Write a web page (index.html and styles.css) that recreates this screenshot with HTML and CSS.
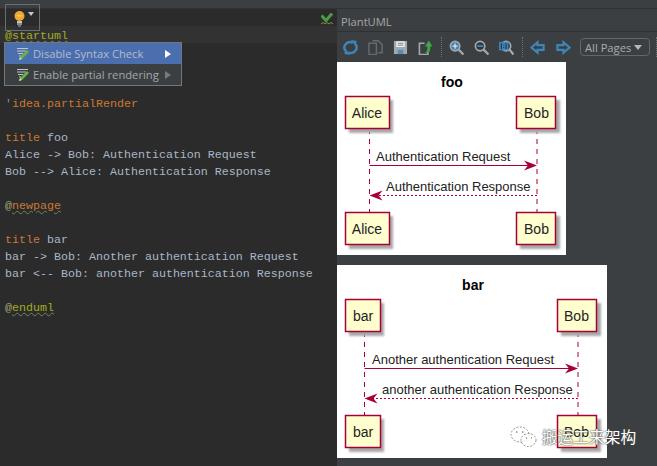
FILE: index.html
```html
<!DOCTYPE html>
<html lang="en">
<head>
    <meta charset="UTF-8">
    <title>PlantUML</title>
    <link rel="stylesheet" href="styles.css">
</head>
<body>
<div class="top-strip"></div>
<div class="workspace">
    <section class="editor">
        <div class="editor-bar">
            <svg class="check-icon" viewBox="0 0 12 12">
                <path d="M.5 2.500l4.500 5 6-7" fill="none" stroke="#4f9a45" stroke-width="3"/>
                <path d="M0 11l2-1.500 2 1.500 2-1.500 2 1.500 2-1.500 2 1.500" fill="none" stroke="#7f9a3c"/>
            </svg>
        </div>
        <div class="code">
            <div class="line current"><span class="at">@</span><span class="tag squiggle">startuml</span></div>
            <div class="line"></div>
            <div class="line"></div>
            <div class="line"></div>
            <div class="line"><span class="quote">'</span><span class="kw">idea.partialRender</span></div>
            <div class="line"></div>
            <div class="line"><span class="kw">title</span> foo</div>
            <div class="line">Alice -&gt; Bob: Authentication Request</div>
            <div class="line">Bob --&gt; Alice: Authentication Response</div>
            <div class="line"></div>
            <div class="line"><span class="at dim">@</span><span class="kw squiggle">newpage</span></div>
            <div class="line"></div>
            <div class="line"><span class="kw">title</span> bar</div>
            <div class="line">bar -&gt; Bob: Another authentication Request</div>
            <div class="line">bar &lt;-- Bob: another authentication Response</div>
            <div class="line"></div>
            <div class="line"><span class="at dim">@</span><span class="tag squiggle">enduml</span></div>
        </div>
        <div class="bulb-button">
            <svg class="bulb" viewBox="0 0 11 16">
                <circle cx="5.500" cy="5" r="5" fill="#f0a732"/>
                <path d="M3.500 4l1 1.500 1-1.500 1 1.500 1-1.500" fill="none" stroke="#fbe3a8" stroke-width=".8"/>
                <rect x="3" y="10" width="5" height="2" fill="#c4c4c4"/>
                <rect x="3" y="12" width="5" height="2" fill="#8c8c8c"/>
                <rect x="4" y="14" width="3" height="2" fill="#6e6e6e"/>
            </svg>
            <span class="caret"></span>
        </div>
        <ul class="menu">
            <li class="menu-item active">
                <svg class="pencil" viewBox="0 0 14 14">
                    <path d="M1 1.500h11M1 4h9M2 6.500h5M3 9h2" stroke="#c3c6c8" fill="none"/>
                    <path d="M3 13l1-3 7-7 2 2-7 7z" fill="#62b543"/>
                    <path d="M3 13l1-3 2 2z" fill="#e8d5b0"/>
                </svg>
                <span class="menu-label">Disable Syntax Check</span>
                <span class="arrow"></span>
            </li>
            <li class="menu-item">
                <svg class="pencil" viewBox="0 0 14 14">
                    <path d="M1 1.500h11M1 4h9M2 6.500h5M3 9h2" stroke="#c3c6c8" fill="none"/>
                    <path d="M3 13l1-3 7-7 2 2-7 7z" fill="#62b543"/>
                    <path d="M3 13l1-3 2 2z" fill="#e8d5b0"/>
                </svg>
                <span class="menu-label">Enable partial rendering</span>
                <span class="arrow"></span>
            </li>
        </ul>
    </section>

    <section class="preview">
        <header class="preview-title">PlantUML</header>
        <div class="toolbar">
            <svg class="tool" viewBox="0 0 16 16"><path d="M2.500 11.500a6 6 0 0 1 8-8.500M13.500 4.500a6 6 0 0 1-8 8.500" fill="none" stroke="#3d85b8" stroke-width="2.600"/><path d="M8.500 0l6 1-1 6zM7.500 16l-6-1 1-6z" fill="#3d85b8"/></svg>
            <svg class="tool" viewBox="0 0 16 16"><path d="M1 3.500h8v12H1zM5 .8h6l4 4v8.700h-4" fill="none" stroke="#666a6c" stroke-width="1.600"/></svg>
            <svg class="tool" viewBox="0 0 16 16"><path d="M1 1h14v14H1z" fill="#a5a8aa"/><path d="M3.500 1.500h9v6h-9z" fill="#f0f0f0"/><path d="M5 3.500h6M5 5.500h6" stroke="#777"/><path d="M5 10.500h6V15H5z" fill="#4d90c4"/></svg>
            <svg class="tool" viewBox="0 0 16 16"><path d="M7 3.500H1.500v12h9V11" fill="none" stroke="#a5a8aa" stroke-width="1.700"/><path d="M7 13.500c1.500-.5 3-1.500 3-4V7H7.500L11.500.5 15.500 7H13v3c0 2-1.500 3.500-4 3.500z" fill="#3fa648"/></svg>
            <span class="divider"></span>
            <svg class="tool" viewBox="0 0 16 16"><circle cx="6.500" cy="6.500" r="5" fill="#3d85b8" stroke="#a5a8aa" stroke-width="1.800"/><path d="M10 10l5.500 5.500" stroke="#a5a8aa" stroke-width="2.400"/><path d="M3.800 6.500h5.400M6.500 3.800v5.400" stroke="#dfe6ea" stroke-width="1.300"/></svg>
            <svg class="tool" viewBox="0 0 16 16"><circle cx="6.500" cy="6.500" r="5" fill="#33373a" stroke="#a5a8aa" stroke-width="1.800"/><path d="M10 10l5.500 5.500" stroke="#a5a8aa" stroke-width="2.400"/><path d="M3.500 6.500h6" stroke="#3d85b8" stroke-width="2"/></svg>
            <svg class="tool" viewBox="0 0 16 16"><circle cx="7.500" cy="6.500" r="5" fill="#33373a" stroke="#a5a8aa" stroke-width="1.800"/><path d="M11 10l4.500 5.500" stroke="#a5a8aa" stroke-width="2.400"/><path d="M0 2h10v9H0z" fill="#3d85b8"/><path d="M2.500 3.500v6M5 5v.8M5 7.500v.8M7.500 3.500v6" stroke="#1d3546" stroke-width="1.200"/></svg>
            <span class="divider"></span>
            <svg class="tool" viewBox="0 0 16 16"><path d="M1.500 8L8 2.500V5.500h6.500v5H8v3z" fill="none" stroke="#3d85b8" stroke-width="2.400"/></svg>
            <svg class="tool next" viewBox="0 0 16 16"><path d="M14.500 8L8 2.500V5.500H1.500v5H8v3z" fill="none" stroke="#3d85b8" stroke-width="2.400"/></svg>
            <div class="pages-select">All Pages<span class="select-caret"></span></div>
            <span class="divider last"></span>
        </div>
        <div class="diagrams">
            <svg class="diagram" width="229" height="193" viewBox="0 0 229 193">
                <filter id="soft"><feGaussianBlur stdDeviation="1"/></filter>
                <text class="title" x="115" y="25">foo</text>
                <line class="lifeline" x1="32.500" y1="67" x2="32.500" y2="150"/>
                <line class="lifeline" x1="200" y1="67" x2="200" y2="150"/>
                <rect class="shadow" x="12" y="38" width="44" height="33"/>
                <rect class="actor" x="8.500" y="34.500" width="44" height="32"/>
                <text class="label mid" x="30" y="56">Alice</text>
                <rect class="shadow" x="183" y="38" width="40" height="33"/>
                <rect class="actor" x="179.500" y="34.500" width="39" height="32"/>
                <text class="label mid" x="199.500" y="56">Bob</text>
                <text class="label" x="39" y="99">Authentication Request</text>
                <line class="msg" x1="32.500" y1="103.500" x2="198" y2="103.500"/>
                <path class="head" d="M200 103.500l-13-5 4 5-4 5z"/>
                <text class="label" x="49" y="129">Authentication Response</text>
                <line class="msg dashed" x1="200" y1="133.500" x2="34" y2="133.500"/>
                <path class="head" d="M32.500 133.500l13-5-4 5 4 5z"/>
                <rect class="shadow" x="12" y="154" width="44" height="33"/>
                <rect class="actor" x="8.500" y="150.500" width="44" height="32"/>
                <text class="label mid" x="30" y="172">Alice</text>
                <rect class="shadow" x="183" y="154" width="40" height="33"/>
                <rect class="actor" x="179.500" y="150.500" width="39" height="32"/>
                <text class="label mid" x="199.500" y="172">Bob</text>
            </svg>
            <svg class="diagram" width="270" height="193" viewBox="0 0 270 193">
                <text class="title" x="136" y="25">bar</text>
                <line class="lifeline" x1="27.500" y1="67" x2="27.500" y2="150"/>
                <line class="lifeline" x1="241" y1="67" x2="241" y2="150"/>
                <rect class="shadow" x="12" y="38" width="35" height="33"/>
                <rect class="actor" x="8.500" y="34.500" width="35" height="32"/>
                <text class="label mid" x="26" y="56">bar</text>
                <rect class="shadow" x="224" y="38" width="40" height="33"/>
                <rect class="actor" x="220.500" y="34.500" width="39" height="32"/>
                <text class="label mid" x="239.500" y="56">Bob</text>
                <text class="label" x="35" y="99">Another authentication Request</text>
                <line class="msg" x1="27.500" y1="103.500" x2="239" y2="103.500"/>
                <path class="head" d="M241 103.500l-13-5 4 5-4 5z"/>
                <text class="label" x="45" y="129">another authentication Response</text>
                <line class="msg dashed" x1="241" y1="133.500" x2="29" y2="133.500"/>
                <path class="head" d="M27.500 133.500l13-5-4 5 4 5z"/>
                <rect class="shadow" x="12" y="154" width="35" height="33"/>
                <rect class="actor" x="8.500" y="150.500" width="35" height="32"/>
                <text class="label mid" x="26" y="172">bar</text>
                <rect class="shadow" x="224" y="154" width="40" height="33"/>
                <rect class="actor" x="220.500" y="150.500" width="39" height="32"/>
                <text class="label mid" x="239.500" y="172">Bob</text>
            </svg>
        </div>
    </section>
</div>
<div class="watermark">
    <svg class="wechat" viewBox="0 0 27 22">
        <ellipse cx="10" cy="8.500" rx="9" ry="7.500" fill="#fff" fill-opacity=".5" stroke="#777" stroke-dasharray="2 1.500" stroke-width=".8"/>
        <ellipse cx="18.500" cy="14" rx="7.500" ry="6.500" fill="#fff" fill-opacity=".8" stroke="#777" stroke-dasharray="2 1.500" stroke-width=".8"/>
        <path d="M6 6h1.500M12 6h1.500M16 12h1M21 12h1" stroke="#555"/>
    </svg>
    <span>搬运工来架构</span>
</div>
</body>
</html>
```

FILE: styles.css
```css
html, body {
    margin: 0;
    height: 100%;
}
body {
    width: 657px;
    height: 466px;
    overflow: hidden;
    position: relative;
    background: #3c3f41;
    font-family: "Open Sans", "Liberation Sans", sans-serif;
}
.top-strip {
    height: 8px;
    background: #3c3f41;
    border-bottom: 1px solid #323232;
}
.workspace {
    display: grid;
    grid-template-columns: 337px 1fr;
    height: 457px;
}
.editor {
    position: relative;
    background: #2b2b2b;
}
.editor-bar {
    height: 17px;
    display: flex;
    justify-content: flex-end;
    align-items: center;
    padding-right: 4px;
}
.check-icon {
    width: 12px;
    height: 12px;
    margin-top: 3px;
}
.code {
    font-family: "Liberation Mono", "DejaVu Sans Mono", monospace;
    font-size: 11.67px;
    line-height: 21px;
    color: #a9b7c6;
}
.line {
    height: 17px;
    padding-left: 5px;
    white-space: pre;
}
.current {
    background: #323232;
}
.at {
    color: #a3ad1e;
}
.at.dim {
    color: #a0a070;
}
.tag {
    color: #a3ad1e;
}
.kw {
    color: #cc7832;
}
.quote {
    color: #6a9fb5;
}
.squiggle {
    text-decoration: underline wavy #6a8759 1px;
}
.bulb-button {
    position: absolute;
    top: -5px;
    left: 5px;
    width: 35px;
    height: 27px;
    box-sizing: border-box;
    border: 1px solid #6b6e70;
    display: flex;
    align-items: flex-start;
    padding: 6px 0 0 8px;
    gap: 3px;
}
.bulb {
    width: 11px;
    height: 16px;
}
.caret {
    width: 0;
    height: 0;
    margin-top: 1px;
    border: 3.500px solid transparent;
    border-top: 4px solid #c4c7c9;
    border-bottom: 0;
}
.menu {
    position: absolute;
    top: 33px;
    left: 4px;
    width: 176px;
    margin: 0;
    padding: 0;
    list-style: none;
    background: #3c3f41;
    border: 1px solid #75787a;
}
.menu-item {
    height: 21px;
    display: flex;
    align-items: center;
    font-size: 11.2px;
    color: #a4a7a9;
    padding-left: 11px;
}
.menu-item.active {
    background: #4b6eaf;
    color: #b4bccb;
}
.pencil {
    width: 14px;
    height: 14px;
    flex: none;
}
.menu-label {
    margin-left: 3px;
    flex: 1;
}
.arrow {
    width: 0;
    height: 0;
    margin-right: 10px;
    border-left: 6px solid #777a7c;
    border-top: 4px solid transparent;
    border-bottom: 4px solid transparent;
}
.active .arrow {
    border-left-color: #fff;
}
.preview {
    background: #3c3f41;
    display: flex;
    flex-direction: column;
    min-width: 0;
}
.preview-title {
    height: 22px;
    line-height: 25px;
    padding-left: 4px;
    font-size: 11.2px;
    color: #a4a7a9;
    border-bottom: 1px solid #2f3133;
}
.toolbar {
    height: 30px;
    display: flex;
    align-items: center;
    padding-left: 6px;
    gap: 10px;
}
.tool {
    width: 15px;
    height: 15px;
    flex: none;
}
.tool.next {
    margin-left: 1px;
}
.divider {
    height: 20px;
    border-left: 1px dotted #6f7274;
    margin: 0 -3px 0 -2px;
}
.divider.last {
    margin-left: -4px;
}
.pages-select {
    width: 70px;
    height: 18px;
    margin-left: -1px;
    box-sizing: border-box;
    border: 1px solid #646769;
    border-radius: 4px;
    font-size: 11.2px;
    color: #a9acae;
    padding-left: 4px;
    display: flex;
    align-items: center;
    gap: 3px;
}
.select-caret {
    width: 0;
    height: 0;
    border: 4.500px solid transparent;
    border-top: 5px solid #b4b7b9;
    border-bottom: 0;
}
.diagrams {
    display: flex;
    flex-direction: column;
    align-items: flex-start;
    gap: 10px;
}
.diagram {
    display: block;
    background: #fff;
}
.title {
    font-size: 14px;
    font-weight: bold;
    text-anchor: middle;
    fill: #000;
    font-family: "Liberation Sans", sans-serif;
}
.label {
    font-size: 13px;
    fill: #222;
    font-family: "Liberation Sans", sans-serif;
}
.label.mid {
    font-size: 14px;
    text-anchor: middle;
}
.lifeline {
    stroke: #a80036;
    stroke-dasharray: 5 5;
}
.actor {
    fill: #fefece;
    stroke: #a80036;
    stroke-width: 1.500;
}
.shadow {
    fill: #a8a8a8;
    filter: url(#soft);
}
.msg {
    stroke: #a80036;
}
.msg.dashed {
    stroke-dasharray: 2 2;
}
.head {
    fill: #a80036;
}
.watermark {
    position: absolute;
    left: 510px;
    top: 426px;
    display: flex;
    align-items: center;
    gap: 5px;
    color: #fff;
    font-family: "Noto Sans CJK SC", sans-serif;
    font-size: 15.700px;
    line-height: 22px;
    text-shadow: 0 0 2px #444, 0 0 1px #555;
}
.wechat {
    width: 27px;
    height: 22px;
}
```
